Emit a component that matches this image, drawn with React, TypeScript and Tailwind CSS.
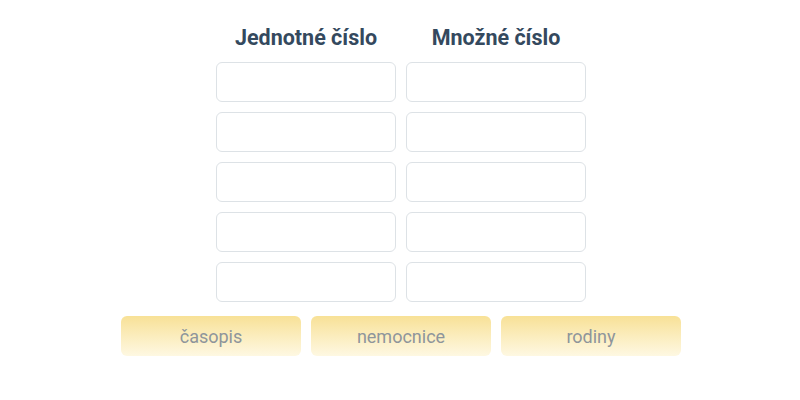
import React from "react";

export default function App() {
  const rows = [0, 1, 2, 3, 4];
  const words = ["časopis", "nemocnice", "rodiny"];
  return (
    <div className="w-[800px] h-[400px] bg-white flex flex-col items-center pt-[22px] pl-[2px]" style={{ fontFamily: "Roboto, 'Noto Sans', sans-serif" }}>
      <div className="grid grid-cols-[180px_180px] gap-x-[10px]">
        <div className="h-[32px] flex items-center justify-center text-[21.5px] font-bold text-[#34495e] whitespace-nowrap">Jednotné číslo</div>
        <div className="h-[32px] flex items-center justify-center text-[21.5px] font-bold text-[#34495e] whitespace-nowrap">Množné číslo</div>
      </div>
      <div className="mt-[8px] grid grid-cols-[180px_180px] gap-[10px]">
        {rows.map((r) => (
          <React.Fragment key={r}>
            <div className="h-[40px] rounded-[6px] border border-[#dde2e6] bg-white" />
            <div className="h-[40px] rounded-[6px] border border-[#dde2e6] bg-white" />
          </React.Fragment>
        ))}
      </div>
      <div className="mt-[14px] flex gap-[10px]">
        {words.map((w) => (
          <div key={w} className="w-[180px] h-[40px] rounded-[6px] bg-gradient-to-b from-[#f8e196] to-[#fef8e2] flex items-center justify-center text-[18px] text-[#8e959b]">
            {w}
          </div>
        ))}
      </div>
    </div>
  );
}
